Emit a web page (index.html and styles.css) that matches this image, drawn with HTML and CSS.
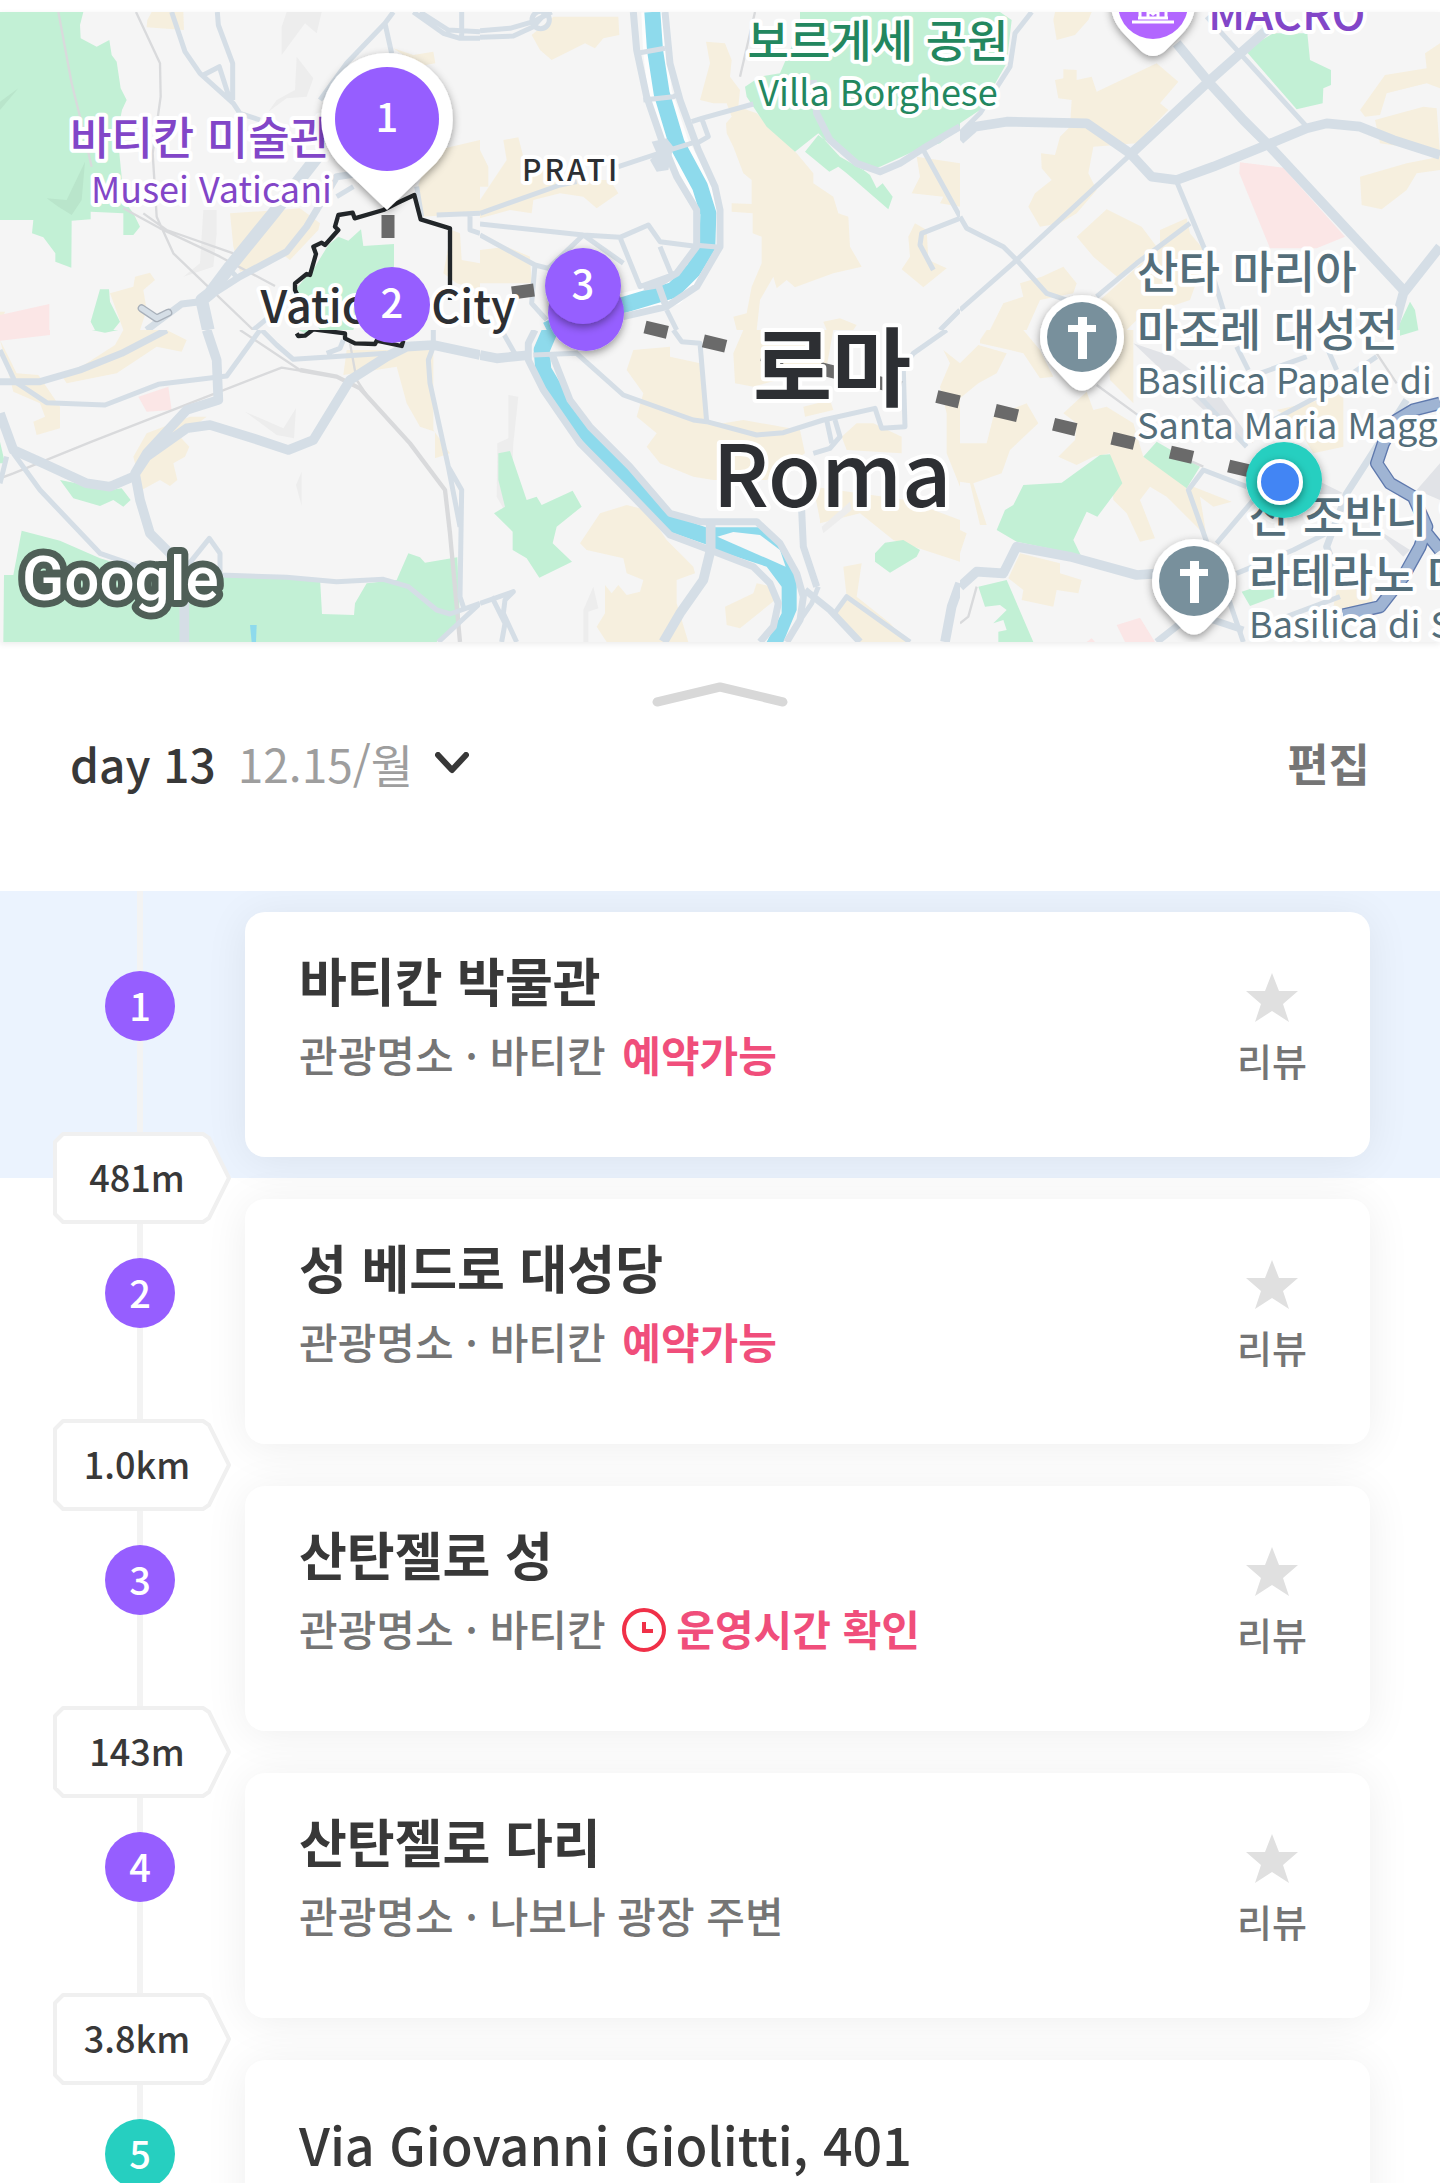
FILE: index.html
```html
<!DOCTYPE html>
<html lang="ko">
<head>
  <meta charset="UTF-8">
  <meta name="viewport" content="width=device-width, initial-scale=1.0">
  <title>day 13 - 로마</title>
  <link rel="stylesheet" href="styles.css">
</head>
<body>
<div class="app">
  <div class="map">
    <svg viewBox="0 12 1440 630" preserveAspectRatio="xMidYMid slice" role="img" aria-label="로마 지도">
      <defs>
        <filter id="pin-shadow" x="-30%" y="-30%" width="160%" height="160%">
          <feDropShadow dx="0" dy="3" stdDeviation="4" flood-color="#000" flood-opacity="0.4"/>
        </filter>
        <g id="church">
          <path class="pin-body" filter="url(#pin-shadow)" d="M-42 0 A42 42 0 1 1 42 0 C42 14 35 24 26 33 L12 48 Q0 59 -12 48 L-26 33 C-35 24 -42 14 -42 0Z"/>
          <circle r="35" fill="#78909c"/>
          <path fill="#fff" d="M-4 -20 H5 V-12 H14 V-5 H5 V22 H-4 V-5 H-14 V-12 H-4Z"/>
        </g>
      </defs>

      <!-- tiles, top row -->
      <svg x="0" y="12" width="480" height="318" viewBox="0 36 1440 954">
        <path class="hill" d="M860 36 H965 L950 100 L915 70 L845 165 V80Z M890 170 L940 235 L920 290 L860 295 L805 335 L830 300 L885 270Z M610 630 H650 V700 L640 800 L550 830 L600 790Z"/>
        <path class="park" d="M0 36 H250 L240 75 L242 115 L290 140 L328 120 L335 165 L350 185 L362 265 L380 300 L366 330 L352 400 L368 560 L370 600 L400 640 L420 680 L400 705 H370 V640 L272 635 V658 L215 662 L214 803 L166 785 V760 L130 712 L96 700 L100 660 L0 660Z M300 868 H327 L330 905 L360 965 L340 990 H285 L272 965Z M885 870 L945 800 L985 735 L1015 710 L1045 722 L1083 688 L1090 738 L1182 732 V800 L1100 850 L1060 990 H960Z"/>
        <path class="shade" d="M0 330 L55 265 L0 305Z M140 595 L200 600 L255 485 L245 600 L215 645 L175 620Z"/>
        <path class="block" d="M455 36 H550 L552 90 L440 82 L442 60Z M1180 145 L1240 165 L1300 155 L1306 190 L1260 198Z M690 640 L840 630 L900 625 L960 670 L955 690 L870 780 L850 765 L770 800 L720 815 L700 740Z M1440 420 L1290 455 L1250 570 L1265 650 L1440 640Z M1355 690 L1380 700 L1385 780 L1440 790 V870 L1370 850 L1330 820Z M330 880 L400 860 L405 830 L450 818 L465 840 L430 870 L440 930 L420 990 H370Z M0 935 H15 L10 948 H0Z"/>
        <path class="clinic" d="M0 945 L148 912 V990 H0Z"/>
        <path class="rail" d="M175 36 L215 250 L240 350 L275 500 M408 36 L480 190 L482 290 L458 460 L470 650 L520 760 L760 990 M370 625 L480 685 L660 770 L825 858 M430 640 L500 690 L700 760"/>
        <path class="road" d="M515 36 L555 155 L600 220 L700 310 L720 340 L780 360 M652 36 L655 75 L698 190 V300 M610 225 L658 200 L690 300 M1180 36 L1155 70 L1040 190 L960 300 M1155 70 L1175 160 M1240 36 L1330 100 L1380 115 L1440 115 M1385 36 V110 M1260 36 L1345 90 L1440 95 M680 800 L710 830 M1310 645 L1440 640 M1410 640 V690 L1440 700 M1250 560 L1265 650 M1010 590 L1060 560 M760 990 L880 890"/>
        <path class="road road-mid" d="M600 905 L545 912 L440 990 M610 900 L720 830 L860 755 L920 680 L1010 530 L1080 520"/>
        <path class="road road-wide" d="M960 460 L820 640 L690 800 L630 880 L605 900 L625 990"/>
        <path class="tunnel" d="M425 925 L470 955 L505 938"/>
        <path class="tunnel-in" d="M425 925 L470 955 L505 938"/>
        <path class="border" d="M900 900 L885 870 V850 L920 822 L930 825 L948 762 L940 740 L965 728 L975 735 L1015 690 L1005 680 L1015 645 L1058 638 L1064 655 L1150 630 L1190 610 L1243 585 L1262 658 L1350 685 V900"/>
      </svg>
      <svg x="480" y="12" width="480" height="318" viewBox="0 36 1440 954">
        <path class="block" d="M220 50 H415 L418 105 L370 115 L345 145 L315 130 L215 180 L180 150 L155 105Z M678 125 L735 130 L755 180 L750 230 L780 270 L775 320 L830 340 L950 460 L1000 520 V550 L1060 590 L1075 640 L1105 650 L1110 740 L1145 800 L1060 820 L945 862 L920 840 L890 865 L880 830 L840 900 L830 990 H770 L760 950 L800 940 L815 860 L845 790 V710 L818 700 V640 L755 635 V610 L815 612 V540 L790 520 L760 440 L740 400 L738 370 L755 350 L740 310 L700 310 L660 300 L690 190Z M0 600 L80 480 L70 420 L115 412 L130 470 L240 540 H390 L415 580 L350 625 L310 590 L240 580 L160 600 L155 640 L90 630 L0 655Z M0 750 L80 740 L150 770 L155 850 H0Z M0 450 L25 500 V560 H0Z M1310 470 L1440 490 V620 L1380 610 L1390 590 L1295 580 L1320 530Z M1305 670 L1340 690 L1345 780 L1400 805 L1330 862 L1265 808 L1290 770 L1285 710Z M1030 965 L1080 955 L1130 975 L1120 990 H1040Z"/>
        <path class="park" d="M960 36 H1440 V380 L1380 430 L1310 450 L1200 500 L1150 510 L1080 470 L1015 400 L945 455 L860 380 L800 290 L795 260 L840 230 L900 220 L960 80Z M1015 405 L975 455 L1048 515 L1075 500 L1100 520 L1225 628 L1238 590 L1208 550 L1190 565 L1170 525Z"/>
        <path class="bank" d="M520 36 L525 150 L540 280 L590 430 L660 560 L682 640 V730 L640 810 L580 880 L430 915 L300 950 L200 990"/>
        <path class="river" d="M517 36 L525 150 L545 280 L590 430 L660 560 L685 640 L682 740 L640 810 L580 870 L430 915 L300 940 L200 990"/>
        <path class="rail" d="M825 36 L780 230"/>
        <path class="road" d="M480 158 L555 145 M490 300 L580 290 L600 280 M415 500 L530 462 L650 425 M640 735 L720 742 M635 365 L665 355 L820 312 M665 355 L685 410 L650 430 M0 640 L240 555 L290 545 M0 672 L310 705 L420 712 L505 675 L540 725 L640 738 M420 712 L480 860 L575 825 L540 740 M0 705 L165 795 L205 805 L310 705 L430 790 M165 795 L155 910 L200 960 M560 930 L590 990 M1330 450 L1440 650 M1440 655 L1325 700 L1320 735 L1360 810 M1440 930 L1380 990 M0 92 L90 85 L160 65 L215 36 M0 112 L100 108 L160 80 L200 36"/>
        <path class="road road-mid" d="M460 36 L470 150 L500 290 L545 420 L590 530 L650 630 V740 L590 820 L530 855 L490 862 M555 36 L570 190 L600 300 L655 450 L705 560 L720 630 V740 L650 860 L560 920 L430 950 M535 855 L560 925 M1000 240 L1010 340 L1050 420 L1130 490 L1200 515 L1260 490 L1330 445 L1440 380"/>
        <circle class="road" cx="182" cy="60" r="26"/>
        <path class="road-fill" d="M515 425 L560 415 L580 440 L565 510 L530 515 L510 480 L530 460Z"/>
      </svg>
      <svg x="960" y="12" width="480" height="318" viewBox="0 36 1440 954">
        <path class="block" d="M285 36 H395 L385 60 L345 105 L290 120 L280 60Z M285 240 L310 235 V208 L350 210 V240 L395 230 L410 275 L590 190 L655 245 L600 310 L625 330 L530 430 L400 440 L385 520 L410 570 L350 640 L300 670 L240 680 L205 620 L225 580 L275 540 L245 505 L243 460 L285 465 L300 410 L330 380 L335 300 L295 295Z M350 710 L440 628 L545 680 L590 740 L480 838 L400 770Z M600 690 L680 655 L690 700 L740 760 L690 900 L540 950 L500 990 H400 L420 900 L600 740Z M180 850 L245 830 L310 800 L350 850 L340 880 L240 900 L200 990 H90 L130 910 L190 890Z M1440 130 L1395 160 L1400 205 L1275 225 L1200 330 L1215 350 L1260 345 L1280 280 L1400 250 L1440 265Z M1245 360 L1390 320 L1430 325 L1440 460 L1330 440 L1260 430Z M1200 530 L1340 490 L1440 470 V510 L1370 520 L1340 570 L1265 628 L1205 615Z"/>
        <path class="clinic" d="M840 487 L970 503 L1155 710 L1070 745 H930 L838 520Z"/>
        <path class="park" d="M0 36 H120 L155 60 L140 190 L60 330 L0 370Z M855 150 L940 100 H1042 L1050 180 L1113 210 V255 L1090 265 L1088 310 L1010 328Z M1350 905 L1365 930 L1375 990 H1310Z"/>
        <path class="road" d="M740 50 L840 160 L1045 385 M515 460 L170 780 L0 930 M0 650 L20 685 L130 740 L170 780 L260 880 L320 900 M650 545 L735 750 L790 930 M690 670 L530 790 L410 890 M215 36 L165 100 L150 200 L60 340 L0 400"/>
        <path class="road road-big" d="M0 420 L45 380 L140 365 L380 370 L510 460 L575 530 L650 540 L760 500 L920 435 L1040 385 L1100 370 L1200 380 L1300 420 L1440 465 M650 130 L745 245 L850 360 L930 440 L1330 870 M920 90 L745 245 L515 460 M1440 740 L1330 880 L1300 990"/>
      </svg>

      <!-- tiles, bottom row -->
      <svg x="0" y="330" width="480" height="312" viewBox="0 30 1440 936">
        <path class="hill" d="M735 275 L850 325 L888 265 L882 355 L830 345Z M905 455 V558 L888 495Z"/>
        <path class="block" d="M345 75 L370 30 H500 L560 60 L545 95 L470 80 L350 160 L200 190 L190 175Z M0 60 L50 160 L115 165 L180 260 V325 L110 345 L100 305 L135 290 L120 250 L40 215Z M1040 90 H1300 V330 L1350 400 L1305 415 V335 L1260 320 L1220 250 L1190 140 L1030 165Z M400 410 L440 340 L570 290 L620 290 L540 350 L568 380 L555 410 L520 430 L532 480 L510 498 L480 480 L425 510 L410 450Z"/>
        <path class="clinic" d="M0 30 H150 V45 L0 62Z M415 230 L505 200 L515 270 L440 275Z"/>
        <path class="park" d="M275 30 H355 L315 38Z M0 365 L15 430 H0Z M180 480 L330 510 L365 505 L392 540 L370 560 L340 540 L300 558 L220 535Z M12 765 H40 L65 632 L180 662 L300 715 L400 745 L960 775 L966 882 L1062 885 L1065 850 L1100 790 L1190 780 L1225 700 L1260 712 L1275 728 L1372 712 L1380 900 L1310 966 H10Z M895 30 H940 L915 40Z"/>
        <path class="water" d="M750 915 H770 L768 966 H755Z"/>
        <path class="rail" d="M0 475 L40 460 L275 365 L615 232 L845 143 L1010 170 L1080 205 M720 30 L900 150 M1050 70 L1070 180 L1110 240"/>
        <path class="rail rail-wide" d="M900 150 L1010 170 L1080 205 L1230 370 L1335 510 L1350 640 L1380 966"/>
        <path class="road" d="M0 90 L45 185 L140 248 L315 255 L475 193 L680 168 L780 30 M40 400 L120 510 L300 700 L430 745 L560 740 L628 655 L660 700 V765 L860 772 L1010 785 L1150 778 L1225 800 L1310 870 L1350 882 L1440 850 M1300 30 V80 L1285 120 L1290 190 L1345 440 L1380 620 M1345 440 L1385 510 L1380 830 L1390 860 M1440 850 L1315 966 M785 30 L830 75 L880 118 L1160 100 M0 490 L20 410 M980 100 L1020 85 L1030 60"/>
        <path class="road road-mid" d="M0 185 H120 L240 150 L365 100 L500 30"/>
        <path class="road road-big" d="M0 280 L40 390 L130 430 L260 490 L330 500 L400 470 L440 410 L560 325 L630 315 L760 355 L865 390 L940 360 L1050 180 L1160 110 L1220 80 L1300 75 L1440 105 M620 30 L650 120 L655 240 L560 270 L440 400 L405 460 L420 540 L450 640 L510 700 L553 790 V966"/>
        <path class="border" d="M890 40 L895 48 L915 47 L940 28 L1035 40 V55 L1065 70 L1125 72 L1130 62 L1205 78 L1210 62"/>
      </svg>
      <svg x="480" y="330" width="480" height="312" viewBox="0 30 1440 936">
        <path class="block" d="M460 90 L570 80 V110 L660 130 L675 300 L730 310 L790 300 L960 330 L975 400 L860 480 H700 L640 470 L540 430 L500 380 L530 340 L470 290 L490 220 L440 150Z M760 100 L790 30 H1060 L1040 140 L820 200 L765 190Z M970 260 L1050 240 L1060 270 L975 290Z M1085 350 L1130 310 H1180 L1265 350 V400 L1100 390Z M1020 600 L1000 500 L1280 540 L1440 600 V725 L1240 660 L1140 580 L1020 610Z M1390 90 L1440 130 V500 L1400 400 V280 L1380 200 L1410 130Z M300 670 L360 580 L440 555 L500 570 L560 660 L640 740 L645 760 L590 780 V850 L625 966 H380 L350 920 L375 880 V795 L395 820 L415 795 L440 825 L480 815 L490 780 L440 760 L430 715 L320 690Z M735 860 L820 820 L830 790 L880 800 L885 840 L780 925 L740 915Z M1090 740 L1145 730 L1130 830 L1230 910 L1280 966 H1140 L1065 885 L1100 830Z"/>
        <path class="hill" d="M85 225 L115 230 L100 370 L90 600 L50 530 L52 370 L85 355Z M340 800 L355 865 L325 875 V966 H310 V870Z M1025 620 L1110 545 L1115 570 L1030 640Z"/>
        <path class="park" d="M55 400 L90 393 L140 540 L170 530 L185 555 L278 512 L305 560 L230 620 L218 670 L276 725 L178 773 L140 715 L98 690 V635 L42 580 L75 560 L55 480Z M1185 700 L1215 668 L1270 660 L1320 690 L1310 710 L1230 758 L1185 725Z"/>
        <path class="river" d="M215 20 L185 90 L190 150 L270 285 L420 450 L570 610 L700 655"/>
        <path class="water" d="M690 622 H850 L915 690 L950 770 V870 L910 966 H860 L905 880 V800 L860 740 L690 685Z"/>
        <path class="land" d="M712 650 L760 636 L840 645 L900 690 L917 740 L860 715Z"/>
        <path class="road road-mid" d="M165 30 L145 70 V120 L190 210 L300 370 L440 510 L570 645 L690 690 L820 740 L870 790 L895 850 L880 920 L840 966 M215 100 L270 240 L330 320 L450 440 L570 580 L660 605 H830 L900 670 L950 760 L970 830 L960 900 L920 966 M975 810 L1050 870 L1140 966"/>
        <path class="road" d="M70 40 L110 110 M160 105 L290 100 L430 225 L640 300 L680 305 L830 345 L910 338 L1030 300 L1185 265 L1205 325 L1275 320 L1270 150 L1300 100 L1400 30 M580 30 L605 65 L660 70 L680 305 M1040 300 L1055 370 M1065 300 L1080 350 L1050 385 L1000 400 M1015 800 L995 850 L940 930 M1060 885 L1100 830 L1290 966 M0 850 L100 815 L75 840 L70 880 L110 966 M35 830 L75 910 L65 966"/>
        <path class="road road-big" d="M692 612 V690 L670 780 L600 880 L550 966 M0 105 L50 115 L150 105 M1440 790 L1415 860 L1395 966"/>
        <path class="road road-mid" d="M965 570 L970 680 L1010 800"/>
      </svg>
      <svg x="960" y="330" width="480" height="312" viewBox="0 30 1440 936">
        <path class="block" d="M60 60 L80 30 H190 L240 90 L280 170 L240 175 L190 100 L150 90 L60 70Z M0 130 L55 75 L140 100 L110 160 L55 190 L0 235Z M0 370 H80 L100 290 L200 250 L235 310 L150 390 L125 460 L40 490 L80 615 H60 L30 490 L0 485Z M310 280 L380 215 L400 270 L440 260 L520 310 L550 410 L700 500 L815 545 L760 560 L720 530 L740 650 L620 530 L570 500 L540 540 L585 655 L540 665 L500 580 L460 540 L450 400 L400 410 L350 435 L295 410 L345 360 L350 310Z M145 775 L180 700 L300 730 V760 L365 780 L355 820 L290 810 L280 860 L185 840 L190 810Z M0 630 L20 640 L0 700Z M440 30 H520 V250 L450 180Z M950 270 L1080 240 L1150 200 V380 L1060 400 L1000 300Z M1130 810 L1230 800 L1240 850 L1200 880 L1120 860Z"/>
        <path class="yard" d="M520 70 L640 110 L760 200 L880 370 L840 360 L720 260Z M1050 470 L1150 520 L1060 530Z M1440 430 L1370 510 L1440 540Z M1240 620 L1350 690 L1330 710Z"/>
        <path class="park" d="M190 495 L305 488 L420 405 L450 403 L487 490 L412 590 L380 575 L340 660 L362 705 L170 665 L110 630 L135 570 L160 555Z M550 410 L590 365 L720 440 L680 505Z M55 800 L140 780 L220 966 H115 V935 L140 930 L130 900 L100 910 L140 870 L120 855 L75 860Z M845 815 L890 800 L945 810 V830 L870 858Z M1320 30 H1377 L1320 47Z"/>
        <path class="clinic" d="M470 915 L540 893 L585 966 H495Z M380 966 L395 955 L405 966Z"/>
        <path class="rail" d="M410 195 L540 290 M640 400 L730 440 M0 910 L25 890 L50 800 M1250 100 L1310 190"/>
        <path class="road" d="M860 500 L730 450 L685 510 L745 680 M880 540 L770 670 M830 760 L1000 690 L1100 640 M800 820 L850 966 M900 160 L1040 110 M830 80 L865 150 M1100 80 L1130 150 M940 300 L1090 220 L1250 110 M860 380 L700 210 M980 890 L1140 830"/>
        <path class="road road-mid" d="M1340 240 L1160 520 L1100 680 L1130 760 M590 966 L700 880 L850 930"/>
        <path class="road road-big" d="M0 800 L50 755 L130 760 L170 680 L330 710 L530 765 L600 760"/>
        <path class="highway-edge" d="M1440 250 L1360 270 L1310 300 L1270 370 L1250 430 L1290 490 L1360 530 L1400 620 L1380 680 L1330 770 L1260 860 L1150 885 M1400 640 L1440 690"/>
        <path class="highway" d="M1440 250 L1360 270 L1310 300 L1270 370 L1250 430 L1290 490 L1360 530 L1400 620 L1380 680 L1330 770 L1260 860 L1150 885 M1400 640 L1440 690"/>
      </svg>

      <!-- route -->
      <path class="route" d="M388 215 V238 M512 293 L534 290"/>
      <path class="route route-dashed" d="M645 327 L1275 477"/>

      <!-- place names -->
      <g class="label museum">
        <text class="ko" x="70" y="155">바티칸 미술관</text>
        <text class="en" x="332" y="203" text-anchor="end">Musei Vaticani</text>
        <text class="ko" x="1208" y="30">MACRO</text>
      </g>
      <g class="label garden">
        <text class="ko" x="878" y="58" text-anchor="middle">보르게세 공원</text>
        <text class="en" x="878" y="106" text-anchor="middle">Villa Borghese</text>
      </g>
      <g class="label church">
        <text class="ko" x="1137" y="289">산타 마리아</text>
        <text class="ko" x="1137" y="347">마조레 대성전</text>
        <text class="en" x="1137" y="394">Basilica Papale di</text>
        <text class="en" x="1137" y="439">Santa Maria Maggiore</text>
        <text class="ko" x="1249" y="533">산 조반니 인</text>
        <text class="ko" x="1249" y="592">라테라노 대성전</text>
        <text class="en" x="1249" y="638">Basilica di San Giovanni</text>
      </g>
      <g class="label city">
        <text class="district" x="522" y="181">PRATI</text>
        <text class="state" x="388" y="323" text-anchor="middle">Vatican City</text>
        <text class="capital" x="832" y="400" text-anchor="middle">로마</text>
        <text class="capital latin" x="832" y="507" text-anchor="middle">Roma</text>
      </g>

      <!-- pins -->
      <g transform="translate(1153 4)">
        <path class="pin-body" filter="url(#pin-shadow)" d="M-42 0 A42 42 0 1 1 42 0 C42 14 35 24 26 33 L12 47 Q0 57 -12 47 L-26 33 C-35 24 -42 14 -42 0Z"/>
        <circle r="35" fill="#b266ff"/>
        <path fill="none" stroke="#fff" stroke-width="3" d="M-21 18 H21 M-15 14 H15 M-13 14 V0 M13 14 V0 M-5 13 V6 L0 10 L5 6 V13"/>
      </g>
      <use href="#church" x="1082" y="337"/>
      <use href="#church" x="1194" y="581"/>

      <g class="stop">
        <circle cx="586" cy="313" r="38" filter="url(#pin-shadow)"/>
        <circle cx="583" cy="286" r="38" filter="url(#pin-shadow)"/>
        <text x="583" y="299">3</text>
        <circle cx="392" cy="305" r="38"/>
        <text x="392" y="318">2</text>
        <path class="pin-body" filter="url(#pin-shadow)" d="M387 53 A66 66 0 0 1 436 163 L387 210 L338 163 A66 66 0 0 1 387 53Z"/>
        <circle cx="387" cy="119" r="52"/>
        <text x="387" y="132">1</text>
      </g>
      <circle cx="1284" cy="480" r="38" fill="#26cfc0" filter="url(#pin-shadow)"/>
      <circle cx="1280" cy="482" r="21" fill="#4285f4" stroke="#fff" stroke-width="4" filter="url(#pin-shadow)"/>

      <text class="google" x="22" y="600">Google</text>
    </svg>
  </div>

  <header class="sheet-head">
    <button class="handle" type="button" aria-label="펼치기">
      <svg width="136" height="26" viewBox="0 0 136 26"><path d="M5 20 L68 5 L131 20"/></svg>
    </button>
    <div class="day-bar">
      <button class="day" type="button" aria-haspopup="listbox">
        <span>day 13</span>
        <span class="date">12.15/월</span>
        <svg width="34" height="22" viewBox="0 0 34 22"><path d="M3 3 L17 18 L31 3"/></svg>
      </button>
      <button class="edit" type="button">편집</button>
    </div>
  </header>

  <ol class="plan">
    <li class="stop-row active">
      <div class="rail-col">
        <span class="num">1</span>
        <span class="dist"><svg viewBox="0 0 178 92"><path d="M10 2 H150 L156 6 L176 46 L156 86 L150 90 H10 L2 82 V10Z"/></svg><b>481m</b></span>
      </div>
      <article class="card">
        <div class="info">
          <h2>바티칸 박물관</h2>
          <p>관광명소 · 바티칸 <a href="#">예약가능</a></p>
        </div>
        <button class="review" type="button">
          <svg width="54" height="52" viewBox="0 0 54 52"><path d="M27 1 L34 19 H53 L38 32 L44 50 L27 39 L10 50 L16 32 L1 19 H20Z"/></svg>
          리뷰
        </button>
      </article>
    </li>
    <li class="stop-row">
      <div class="rail-col">
        <span class="num">2</span>
        <span class="dist"><svg viewBox="0 0 178 92"><path d="M10 2 H150 L156 6 L176 46 L156 86 L150 90 H10 L2 82 V10Z"/></svg><b>1.0km</b></span>
      </div>
      <article class="card">
        <div class="info">
          <h2>성 베드로 대성당</h2>
          <p>관광명소 · 바티칸 <a href="#">예약가능</a></p>
        </div>
        <button class="review" type="button">
          <svg width="54" height="52" viewBox="0 0 54 52"><path d="M27 1 L34 19 H53 L38 32 L44 50 L27 39 L10 50 L16 32 L1 19 H20Z"/></svg>
          리뷰
        </button>
      </article>
    </li>
    <li class="stop-row">
      <div class="rail-col">
        <span class="num">3</span>
        <span class="dist"><svg viewBox="0 0 178 92"><path d="M10 2 H150 L156 6 L176 46 L156 86 L150 90 H10 L2 82 V10Z"/></svg><b>143m</b></span>
      </div>
      <article class="card">
        <div class="info">
          <h2>산탄젤로 성</h2>
          <p>관광명소 · 바티칸 <a href="#"><svg class="clock" width="44" height="44" viewBox="0 0 44 44"><circle cx="22" cy="22" r="20"/><path d="M22 14 V23 H31"/></svg>운영시간 확인</a></p>
        </div>
        <button class="review" type="button">
          <svg width="54" height="52" viewBox="0 0 54 52"><path d="M27 1 L34 19 H53 L38 32 L44 50 L27 39 L10 50 L16 32 L1 19 H20Z"/></svg>
          리뷰
        </button>
      </article>
    </li>
    <li class="stop-row">
      <div class="rail-col">
        <span class="num">4</span>
        <span class="dist"><svg viewBox="0 0 178 92"><path d="M10 2 H150 L156 6 L176 46 L156 86 L150 90 H10 L2 82 V10Z"/></svg><b>3.8km</b></span>
      </div>
      <article class="card">
        <div class="info">
          <h2>산탄젤로 다리</h2>
          <p>관광명소 · 나보나 광장 주변</p>
        </div>
        <button class="review" type="button">
          <svg width="54" height="52" viewBox="0 0 54 52"><path d="M27 1 L34 19 H53 L38 32 L44 50 L27 39 L10 50 L16 32 L1 19 H20Z"/></svg>
          리뷰
        </button>
      </article>
    </li>
    <li class="stop-row">
      <div class="rail-col">
        <span class="num stay">5</span>
      </div>
      <article class="card address">
        <div class="info">
          <h2>Via Giovanni Giolitti, 401</h2>
        </div>
      </article>
    </li>
  </ol>
</div>
</body>
</html>
```
FILE: styles.css
```css
:root {
  --purple: #965eff;
  --teal: #26cfc0;
  --pink: #f04e7b;
  --text: #383838;
  --sub: #757575;
  --line: #f3f3f3;
}
* {
  box-sizing: border-box;
}
body {
  margin: 0;
  background: #fff;
  color: var(--text);
  font-family: "Noto Sans CJK KR", "Noto Sans", sans-serif;
}
button {
  border: 0;
  padding: 0;
  background: none;
  color: inherit;
  font: inherit;
  cursor: pointer;
}
.app {
  height: 100vh;
  padding-top: 12px;
  display: flex;
  flex-direction: column;
  overflow: hidden;
}

/* Map */
.map {
  flex: none;
  height: 630px;
  background: #f5f5f5;
  box-shadow: 0 2px 6px rgba(0, 0, 0, 0.08);
}
.map > svg {
  display: block;
  width: 100%;
  height: 100%;
}
.park { fill: #c2f0d5; }
.shade { fill: #b9e5cb; }
.block { fill: #f6efde; }
.clinic { fill: #fbe6e6; }
.hill { fill: #ededed; }
.yard { fill: #e1e3e7; }
.land { fill: #f7f7f7; }
.water { fill: #8edaec; }
.river, .bank, .rail, .road, .border, .highway, .highway-edge, .tunnel, .tunnel-in {
  fill: none;
  stroke-linejoin: round;
}
.river { stroke: #8edaec; stroke-width: 48; }
.bank { stroke: #fdfdfd; stroke-width: 72; }
.rail { stroke: #d9dadc; stroke-width: 7; }
.rail-wide { stroke-width: 13; }
.road { stroke: #d5dee6; stroke-width: 15; }
.road-mid { stroke-width: 21; }
.road-big { stroke-width: 29; }
.road-wide { stroke-width: 38; }
.road-fill { fill: #d5dee6; }
.tunnel { stroke: #a8b0ba; stroke-width: 24; stroke-linecap: round; }
.tunnel-in { stroke: #d5dee6; stroke-width: 16; stroke-linecap: round; }
.border { stroke: #222629; stroke-width: 13; }
.highway-edge { stroke: #5f79ad; stroke-width: 40; }
.highway { stroke: #9fb4d3; stroke-width: 32; }
.route { fill: none; stroke: #6a6a6a; stroke-width: 13; }
.route-dashed { stroke-dasharray: 23 37; }

.label text {
  stroke: #fff;
  stroke-width: 8px;
  stroke-linejoin: round;
  paint-order: stroke;
}
.ko { font-size: 45px; font-weight: 500; }
.en { font-size: 36px; }
.museum { fill: #8246c8; }
.garden { fill: #23875f; }
.church { fill: #546e7a; }
.city { fill: #2d2f33; font-weight: 500; }
.district { font-size: 30px; letter-spacing: 3px; }
.state { font-size: 45px; }
.capital { font-size: 86px; font-weight: 700; }
.capital.latin { font-weight: 500; }
.pin-body { fill: #fff; }
.stop circle { fill: var(--purple); }
.stop text {
  fill: #fff;
  font-size: 40px;
  font-weight: 500;
  text-anchor: middle;
}
.google {
  fill: #fff;
  stroke: #4f5f57;
  stroke-width: 14px;
  stroke-linejoin: round;
  paint-order: stroke;
  font-family: Roboto, sans-serif;
  font-size: 62px;
  font-weight: 500;
}

/* Sheet header */
.sheet-head {
  flex: none;
  height: 249px;
  padding: 40px 70px 0;
}
.handle {
  display: block;
  margin: 0 auto;
  height: 26px;
}
.handle path {
  fill: none;
  stroke: #d8d8d8;
  stroke-width: 9;
  stroke-linecap: round;
  stroke-linejoin: round;
}
.day-bar {
  margin-top: 20px;
  display: flex;
  justify-content: space-between;
  align-items: center;
  line-height: 70px;
}
.day {
  display: flex;
  align-items: center;
  gap: 22px;
  font-size: 46px;
  font-weight: 500;
}
.day path {
  fill: none;
  stroke: var(--text);
  stroke-width: 6;
  stroke-linecap: round;
  stroke-linejoin: round;
}
.date {
  color: #9e9e9e;
  font-weight: 400;
}
.edit {
  color: var(--sub);
  font-size: 45px;
  font-weight: 700;
}

/* Day plan */
.plan {
  flex: 1;
  margin: 0;
  padding: 0;
  list-style: none;
  overflow-y: auto;
  scrollbar-width: none;
}
.stop-row {
  height: 287px;
  padding: 21px 70px 21px 0;
  display: flex;
}
.stop-row.active {
  background: #ebf3fe;
}
.rail-col {
  position: relative;
  flex: none;
  width: 245px;
  margin: -21px 0;
  padding: 80px 0 0 105px;
  background: linear-gradient(var(--line), var(--line)) 137px 0 / 6px 100% no-repeat;
}
.num {
  display: block;
  width: 70px;
  height: 70px;
  border-radius: 50%;
  background: var(--purple);
  color: #fff;
  font-size: 38px;
  font-weight: 500;
  line-height: 68px;
  text-align: center;
}
.num.stay {
  background: var(--teal);
}
/* distance tag sits over the edge between two rows */
.dist {
  position: absolute;
  z-index: 1;
  left: 53px;
  bottom: -46px;
  width: 178px;
  height: 92px;
  padding-right: 10px;
  text-align: center;
  line-height: 88px;
}
.dist svg {
  position: absolute;
  left: 0;
  top: 0;
}
.dist path {
  fill: #fff;
  stroke: #f0f0f0;
  stroke-width: 4;
  stroke-linejoin: round;
}
.dist b {
  position: relative;
  font-size: 36px;
  font-weight: 500;
}
.card {
  flex: 1;
  display: flex;
  justify-content: space-between;
  padding: 30px 63px 0 54px;
  background: #fff;
  border-radius: 20px;
  box-shadow: 0 4px 44px rgba(0, 0, 0, 0.07);
}
.card h2 {
  margin: 0;
  font-size: 52px;
  font-weight: 700;
  line-height: 76px;
}
.card p {
  margin: 0;
  color: var(--sub);
  font-size: 42px;
  font-weight: 500;
  line-height: 72px;
}
.card a {
  margin-left: 5px;
  color: var(--pink);
  font-weight: 700;
  text-decoration: none;
}
.clock {
  margin-right: 10px;
  vertical-align: -6px;
  fill: none;
  stroke: #f03048;
  stroke-width: 4;
}
.card.address {
  padding-top: 46px;
}
.address h2 {
  font-weight: 500;
}
.review {
  align-self: flex-start;
  margin-top: 30px;
  display: flex;
  flex-direction: column;
  align-items: center;
  color: var(--sub);
  font-size: 38px;
  font-weight: 500;
  line-height: 72px;
}
.review path {
  fill: #e0e0e0;
}
```
